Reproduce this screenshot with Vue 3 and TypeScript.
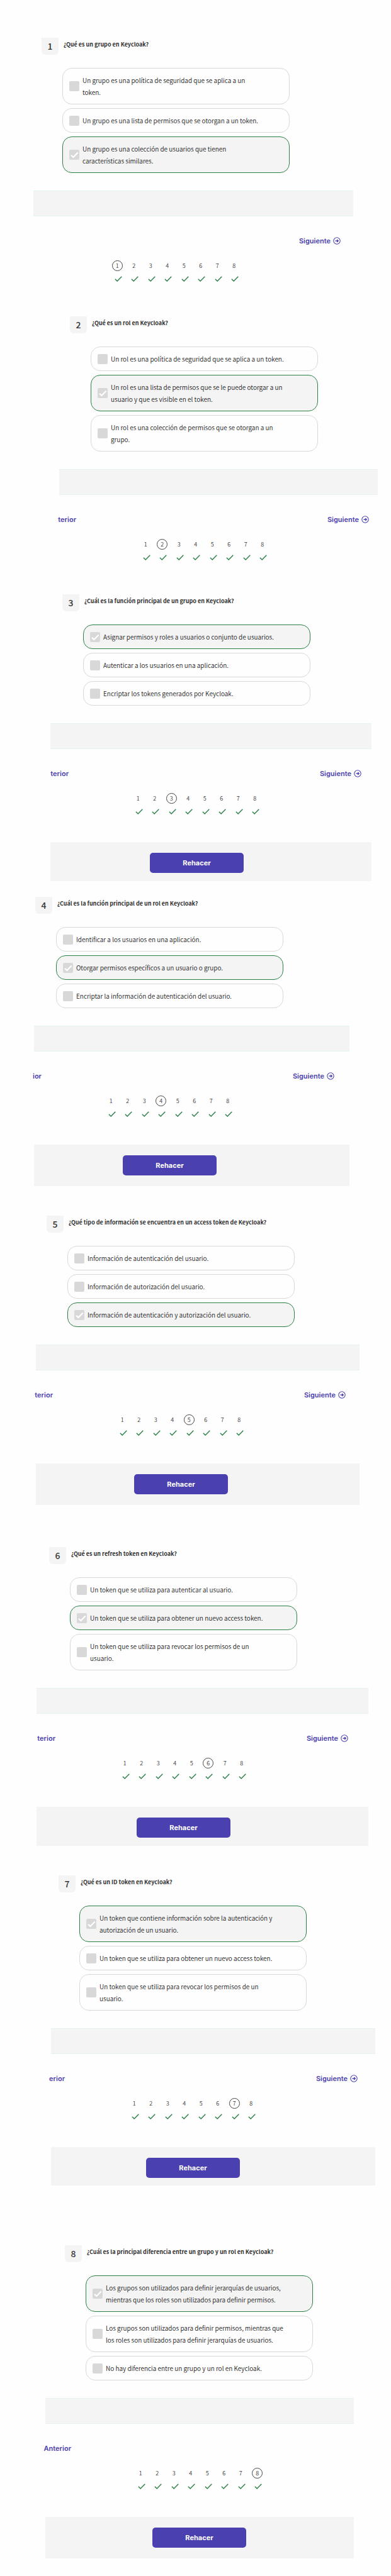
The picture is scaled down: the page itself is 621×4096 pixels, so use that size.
<script setup lang="ts">
import { ref } from 'vue'

interface Option {
  lines: string[]
  chosen?: boolean
}

interface Question {
  id: number
  title: string
  options: Option[]
  prev?: string
  redo: boolean
}

const total = 8

const questions = ref<Question[]>([
  {
    id: 1,
    title: '¿Qué es un grupo en Keycloak?',
    options: [
      { lines: ['Un grupo es una política de seguridad que se aplica a un', 'token.'] },
      { lines: ['Un grupo es una lista de permisos que se otorgan a un token.'] },
      { lines: ['Un grupo es una colección de usuarios que tienen', 'características similares.'], chosen: true },
    ],
    redo: false,
  },
  {
    id: 2,
    title: '¿Qué es un rol en Keycloak?',
    options: [
      { lines: ['Un rol es una política de seguridad que se aplica a un token.'] },
      { lines: ['Un rol es una lista de permisos que se le puede otorgar a un', 'usuario y que es visible en el token.'], chosen: true },
      { lines: ['Un rol es una colección de permisos que se otorgan a un', 'grupo.'] },
    ],
    prev: 'terior',
    redo: false,
  },
  {
    id: 3,
    title: '¿Cuál es la función principal de un grupo en Keycloak?',
    options: [
      { lines: ['Asignar permisos y roles a usuarios o conjunto de usuarios.'], chosen: true },
      { lines: ['Autenticar a los usuarios en una aplicación.'] },
      { lines: ['Encriptar los tokens generados por Keycloak.'] },
    ],
    prev: 'terior',
    redo: true,
  },
  {
    id: 4,
    title: '¿Cuál es la función principal de un rol en Keycloak?',
    options: [
      { lines: ['Identificar a los usuarios en una aplicación.'] },
      { lines: ['Otorgar permisos específicos a un usuario o grupo.'], chosen: true },
      { lines: ['Encriptar la información de autenticación del usuario.'] },
    ],
    prev: 'ior',
    redo: true,
  },
  {
    id: 5,
    title: '¿Qué tipo de información se encuentra en un access token de Keycloak?',
    options: [
      { lines: ['Información de autenticación del usuario.'] },
      { lines: ['Información de autorización del usuario.'] },
      { lines: ['Información de autenticación y autorización del usuario.'], chosen: true },
    ],
    prev: 'terior',
    redo: true,
  },
  {
    id: 6,
    title: '¿Qué es un refresh token en Keycloak?',
    options: [
      { lines: ['Un token que se utiliza para autenticar al usuario.'] },
      { lines: ['Un token que se utiliza para obtener un nuevo access token.'], chosen: true },
      { lines: ['Un token que se utiliza para revocar los permisos de un', 'usuario.'] },
    ],
    prev: 'terior',
    redo: true,
  },
  {
    id: 7,
    title: '¿Qué es un ID token en Keycloak?',
    options: [
      { lines: ['Un token que contiene información sobre la autenticación y', 'autorización de un usuario.'], chosen: true },
      { lines: ['Un token que se utiliza para obtener un nuevo access token.'] },
      { lines: ['Un token que se utiliza para revocar los permisos de un', 'usuario.'] },
    ],
    prev: 'erior',
    redo: true,
  },
  {
    id: 8,
    title: '¿Cuál es la principal diferencia entre un grupo y un rol en Keycloak?',
    options: [
      { lines: ['Los grupos son utilizados para definir jerarquías de usuarios,', 'mientras que los roles son utilizados para definir permisos.'], chosen: true },
      { lines: ['Los grupos son utilizados para definir permisos, mientras que', 'los roles son utilizados para definir jerarquías de usuarios.'] },
      { lines: ['No hay diferencia entre un grupo y un rol en Keycloak.'] },
    ],
    prev: 'Anterior',
    redo: true,
  },
])
</script>

<template>
  <main class="quiz">
    <section v-for="q in questions" :key="q.id" class="card" :class="`card-${q.id}`">
      <div class="inner">
        <header class="head">
          <span class="badge">{{ q.id }}</span>
          <h2 class="title">{{ q.title }}</h2>
        </header>
        <div class="options">
          <label
            v-for="(o, i) in q.options"
            :key="i"
            class="option"
            :class="{ chosen: o.chosen }"
            :for="`q${q.id}-${i}`"
          >
            <span class="box">
              <input :id="`q${q.id}-${i}`" class="tick" type="checkbox" :checked="o.chosen" disabled />
              <svg v-if="o.chosen" class="mark" viewBox="0 0 24 24" aria-hidden="true">
                <path d="M4.5 13.2 L9.6 18 L20.5 6.8" fill="none" stroke="#fff" stroke-width="3.2" />
              </svg>
            </span>
            <span class="text">
              <span v-for="line in o.lines" :key="line" class="line">{{ line }}</span>
            </span>
          </label>
        </div>
      </div>

      <div class="feedback"></div>

      <nav class="pager">
        <span class="prev-slot">
          <button v-if="q.prev" type="button" class="link">{{ q.prev }}</button>
        </span>
        <button v-if="q.id < total" type="button" class="link next">
          Siguiente
          <svg class="arrow" viewBox="0 0 18 18" fill="none" stroke="currentColor" aria-hidden="true">
            <circle cx="9" cy="9" r="7.8" stroke-width="1.6" />
            <path d="M5.3 9 H12.2 M9.4 6 L12.4 9 L9.4 12" stroke-width="1.9" />
          </svg>
        </button>
      </nav>

      <div class="inner">
        <ol class="steps">
          <li v-for="n in total" :key="n" class="step">
            <button type="button" class="num" :class="{ current: n === q.id }">{{ n }}</button>
            <svg class="ok" viewBox="0 0 18 14" aria-hidden="true">
              <path d="M1 7.2 L6.2 12.4 L17.2 1" fill="none" stroke="#2a8047" stroke-width="2.2" />
            </svg>
          </li>
        </ol>
      </div>

      <footer v-if="q.redo" class="foot">
        <button type="button" class="redo">Rehacer</button>
      </footer>
    </section>
  </main>
</template>

<style>
body {
  margin: 0;
  background: #fefefe;
}
</style>

<style scoped>
.quiz {
  display: flow-root;
  padding: 60px 0 28px;
  color: #333;
  font-family: 'Noto Sans CJK SC', 'Noto Sans', sans-serif;
}

.card {
  --left: 53px;
  --right: 60px;
  --shift: 13px;
  --tail: 17px;
  margin: var(--above, 0) var(--right) 0 var(--left);
}

.card-2 { --left: 94px; --right: 21px; --shift: 17px; --above: 55px; }
.card-3 { --left: 80px; --right: 31px; --shift: 19px; --above: 54px; --tail: 13px; }
.card-4 { --left: 54px; --right: 66px; --shift: 2px; --above: 25px; }
.card-5 { --left: 57px; --right: 50px; --shift: 17px; --above: 47px; }
.card-6 { --left: 58px; --right: 36px; --shift: 20px; --above: 67px; --tail: 13px; }
.card-7 { --left: 81px; --right: 25px; --shift: 12px; --above: 47px; --tail: 12px; }
.card-8 { --left: 72px; --right: 59px; --shift: 31px; --above: 95px; }

.inner {
  padding-left: var(--shift);
}

.head {
  display: flex;
  align-items: flex-start;
  gap: 8px;
  height: 48px;
}

.badge {
  flex: none;
  width: 27px;
  height: 27px;
  border-radius: 0 0 6px 6px;
  background: #f4f4f4;
  font-size: 14px;
  font-weight: 500;
  line-height: 27px;
  text-align: center;
}

.title {
  margin: 0;
  font-size: 9px;
  font-weight: 700;
  line-height: 22px;
  white-space: nowrap;
}

.options {
  display: grid;
  gap: 6px;
  max-width: 361px;
  margin-left: 33px;
}

.option {
  display: flex;
  align-items: center;
  gap: 5px;
  padding: 9px 10px;
  border: 1px solid #d9d9d9;
  border-radius: 15px;
}

.option.chosen {
  border-color: #2a8047;
  background: #f4f4f4;
}

.box {
  display: grid;
  flex: none;
  width: 16px;
  height: 16px;
}

.tick {
  grid-area: 1 / 1;
  width: 16px;
  height: 16px;
  margin: 0;
  border-radius: 2px;
  background: #d8d8d8;
  appearance: none;
}

.mark {
  grid-area: 1 / 1;
  width: 16px;
  height: 16px;
}

.text {
  color: #222;
  font-size: 10px;
  font-weight: 350;
  line-height: 19px;
}

.line {
  display: block;
  white-space: nowrap;
}

.feedback {
  box-sizing: border-box;
  height: 41px;
  margin-top: 28px;
  border: solid #e4f4ec;
  border-width: 1px 0;
  background: #f4f4f4;
}

.pager {
  display: flex;
  align-items: center;
  height: 20px;
  margin-top: 29px;
}

.prev-slot {
  display: flex;
  flex: none;
  justify-content: flex-end;
  width: calc(var(--shift) + 10px);
}

.link {
  display: flex;
  flex: none;
  align-items: center;
  gap: 4px;
  padding: 0;
  border: 0;
  background: none;
  color: #4a40ae;
  font: 600 11px/20px Inter, 'Open Sans', sans-serif;
  white-space: nowrap;
}

.next {
  justify-content: flex-end;
  width: 465px;
}

.arrow {
  width: 12px;
  height: 12px;
}

.steps {
  display: grid;
  grid-template-columns: repeat(8, 1fr);
  width: 212px;
  margin: 21px 0 0 107px;
  padding: 0;
  list-style: none;
}

.step {
  display: grid;
  justify-items: center;
  gap: 8px;
}

.num {
  box-sizing: border-box;
  width: 17px;
  height: 17px;
  padding: 0;
  border: 1px solid transparent;
  border-radius: 50%;
  background: none;
  color: #333;
  font: 350 9px/15px 'Noto Sans CJK SC', 'Noto Sans', sans-serif;
}

.num.current {
  border-color: #444;
}

.ok {
  width: 12px;
  height: 9px;
  margin-left: 3px;
}

.foot {
  margin-top: 44px;
  padding: 17px 0 var(--tail) calc(var(--shift) + 139px);
  background: #f4f4f4;
}

.redo {
  display: block;
  width: 149px;
  height: 32px;
  padding: 0;
  border: 0;
  border-radius: 5px;
  background: #4a40b0;
  color: #fff;
  font: 700 11px/32px Inter, 'Open Sans', sans-serif;
}
</style>
